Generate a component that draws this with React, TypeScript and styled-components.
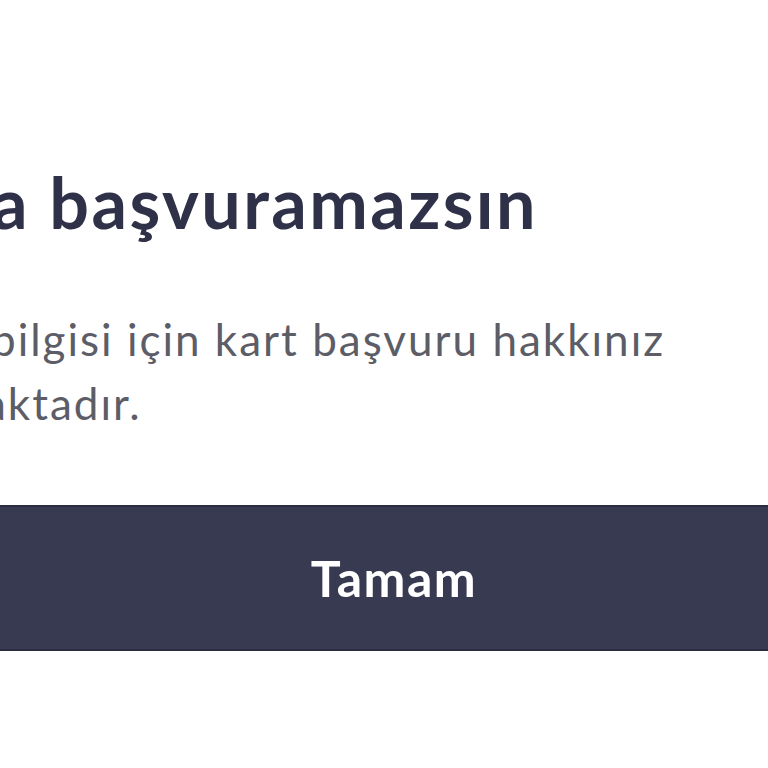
import styled, { createGlobalStyle } from "styled-components";

const GlobalStyle = createGlobalStyle`
  html, body {
    margin: 0;
    padding: 0;
    background: #ffffff;
  }
  * {
    box-sizing: border-box;
  }
`;

// zoomed crop of the dialog, so content runs past both edges
const Viewport = styled.div`
  width: 768px;
  height: 768px;
  overflow: hidden;
  background: #ffffff;
  font-family: "Lato", "Noto Sans", sans-serif;
`;

const Dialog = styled.div`
  display: flex;
  flex-direction: column;
  padding-top: 160px;
`;

const Title = styled.h2`
  margin: 0 0 0 -8px;
  font-size: 70px;
  line-height: 84px;
  font-weight: 700;
  letter-spacing: 2.4px;
  color: #2e3148;
  white-space: nowrap;
`;

const Message = styled.p`
  margin: 63px 0 0;
  display: flex;
  flex-direction: column;
  font-size: 44px;
  line-height: 64px;
  font-weight: 400;
  letter-spacing: 2px;
  color: #5c5d66;
  white-space: nowrap;
`;

const Line = styled.span<{ $shift: number }>`
  margin-left: ${(p) => p.$shift}px;
`;

const Button = styled.button`
  margin: 70px -40px 0 -20px;
  height: 146px;
  border: none;
  border-top: 2px solid #2a2c40;
  border-bottom: 2px solid #2a2c40;
  background: #383a52;
  color: #ffffff;
  font-family: inherit;
  font-size: 50px;
  font-weight: 700;
  letter-spacing: 1.5px;
  cursor: pointer;
`;

function App() {
  return (
    <>
      <GlobalStyle />
      <Viewport>
        <Dialog>
          <Title>a başvuramazsın</Title>
          <Message>
            <Line $shift={-9}>bilgisi için kart başvuru hakkınız</Line>
            <Line $shift={-16}>aktadır.</Line>
          </Message>
          <Button>Tamam</Button>
        </Dialog>
      </Viewport>
    </>
  );
}

export default App;
